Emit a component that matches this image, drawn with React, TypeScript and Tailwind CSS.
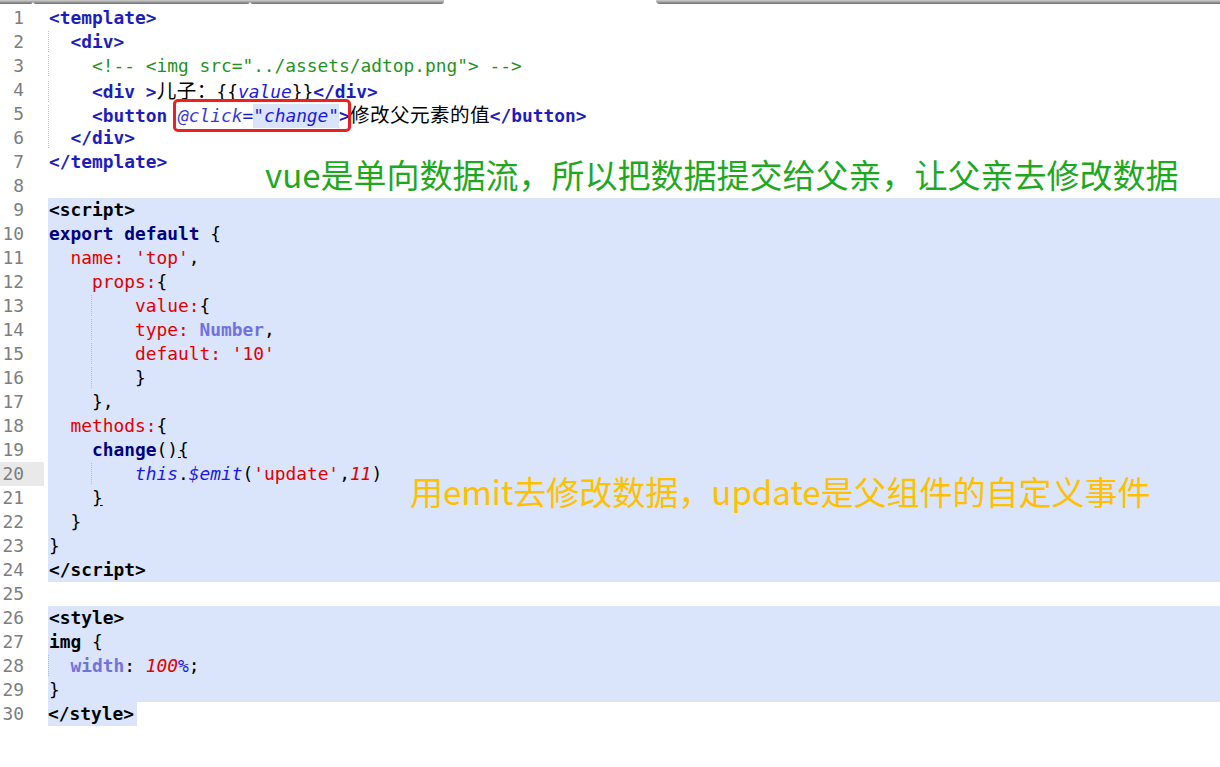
import React from "react";

type Seg = [string, string?];

const T = "text-[#1d1dbd] font-bold";
const K = "text-[#00007f] font-bold";
const B = "text-black font-bold";
const R = "text-[#e00000]";
const P = "text-[#7272dc] font-bold";
const I = "italic text-[#1a1ae0]";
const RI = "italic text-[#e00000]";
const C = "text-[#1f931f]";
const CJK = "cjk";
const U = "underline";
const G = "guide";

const lines: Seg[][] = [
  [["<template>", T]],
  [[" ", G], [" "], ["<div>", T]],
  [[" ", G], ["   "], ['<!-- <img src="../assets/adtop.png"> -->', C]],
  [[" ", G], ["   "], ["<div >", T], ["儿子：", CJK], ["{{"], ["value", I], ["}}"], ["</div>", T]],
  [[" ", G], ["   "], ["<button ", T], ["@click", "box"], [">", T], ["修改父元素的值", CJK], ["</button>", T]],
  [[" ", G], [" "], ["</div>", T]],
  [["</template>", T]],
  [],
  [["<script>", B]],
  [["export default", K], [" {"]],
  [["  "], ["name: 'top'", R], [","]],
  [["    "], ["props:", R], ["{"]],
  [["    "], [" ", G], ["   "], ["value:", R], ["{"]],
  [["    "], [" ", G], ["   "], ["type:", R], [" "], ["Number", P], [","]],
  [["    "], [" ", G], ["   "], ["default: '10'", R]],
  [["    "], [" ", G], ["   "], ["}"]],
  [["    "], ["},"]],
  [["  "], ["methods:", R], ["{"]],
  [["    "], ["change", K], ["()"], ["{", U]],
  [["    "], [" ", G], ["   "], ["this", I], ["."], ["$emit", I], ["("], ["'update'", R], [","], ["11", RI], [")"]],
  [["    "], ["}", U]],
  [["  "], ["}"]],
  [["}"]],
  [["</script>", B]],
  [],
  [["<style>", B]],
  [["img", B], [" {"]],
  [[" ", G], [" "], ["width", P], [": "], ["100", RI], ["%", "text-[#1a1ae0]"], [";"]],
  [["}"]],
  [["</style>", B]],
];

const highlighted = (n: number) => (n >= 9 && n <= 24) || (n >= 26 && n <= 29);

function renderSeg(seg: Seg, i: number) {
  const [text, cls] = seg;
  if (cls === CJK) {
    return (
      <span
        key={i}
        className="text-black text-[19.6px]"
        style={{ fontFamily: '"Noto Sans CJK SC", sans-serif' }}
      >
        {Array.from(text).map((ch, j) => (
          <span key={j} className="inline-block w-[20px] text-center">
            {ch}
          </span>
        ))}
      </span>
    );
  }
  if (cls === G) {
    return (
      <span key={i} className="border-l border-dotted border-[#b8b8c8] -ml-[1px]">
        {text}
      </span>
    );
  }
  if (cls === "box") {
    return (
      <span key={i} className="relative">
        <span className="italic text-[#3b3bd6]">@click</span>
        <span className="text-[#1d1dbd]">=</span>
        <span className="italic text-[#1a1ae0] bg-[#dae4fa] inline-block h-[24px]">"change"</span>
        <span className="absolute left-[-5px] right-[-12px] top-[-6px] bottom-[-6px] border-[3px] border-[#ee1f1f] rounded-[5px]" />
      </span>
    );
  }
  return (
    <span key={i} className={cls}>
      {text}
    </span>
  );
}

export default function App() {
  return (
    <div
      className="relative w-[1220px] h-[767px] bg-white overflow-hidden"
      style={{ fontFamily: '"DejaVu Sans Mono", "Noto Sans CJK SC", monospace' }}
    >
      {/* top tab strip */}
      <div className="flex h-[4px]">
        <div className="w-[33px] bg-gradient-to-b from-[#d0d0d0] to-[#6e6e6e] rounded-br-[3px]" />
        <div className="w-[217px] bg-gradient-to-b from-[#d0d0d0] to-[#6e6e6e] rounded-b-[3px]" />
        <div className="w-[194px] bg-gradient-to-b from-[#d0d0d0] to-[#6e6e6e] rounded-b-[3px]" />
        <div className="w-[212px]" />
        <div className="flex-1 bg-gradient-to-b from-[#d0d0d0] to-[#6e6e6e] rounded-bl-[4px]" />
      </div>
      <div className="pt-[2px] text-[17.85px]">
        {lines.map((segs, idx) => {
          const n = idx + 1;
          const hl = highlighted(n);
          return (
            <div key={n} className="flex h-[24px] leading-[24px]">
              <div
                className={
                  "w-[44px] pr-[20px] text-right text-[#7d7d7d] " +
                  (n === 20 ? "bg-[#e9e9e9]" : "")
                }
              >
                {n}
              </div>
              <div className="w-[4px]" />
              {n === 30 ? (
                <div className="whitespace-pre">
                  <span className="inline-block bg-[#dae4fa] pr-[3px] h-[24px]">
                    {segs.map(renderSeg)}
                  </span>
                </div>
              ) : (
                <div className={"flex-1 whitespace-pre pl-[1px] " + (hl ? "bg-[#dae4fa]" : "")}>
                  {segs.map(renderSeg)}
                </div>
              )}
            </div>
          );
        })}
      </div>

      {/* annotations */}
      <div
        className="absolute left-[265px] top-[156px] text-[33px] leading-[36px] text-[#1fa81f] whitespace-nowrap"
        style={{ fontFamily: '"Noto Sans CJK SC", sans-serif' }}
      >
        vue是单向数据流，所以把数据提交给父亲，让父亲去修改数据
      </div>
      <div
        className="absolute left-[410px] top-[473px] text-[33px] leading-[36px] text-[#ffc000] whitespace-nowrap"
        style={{ fontFamily: '"Noto Sans CJK SC", sans-serif' }}
      >
        用emit去修改数据，update是父组件的自定义事件
      </div>
    </div>
  );
}
